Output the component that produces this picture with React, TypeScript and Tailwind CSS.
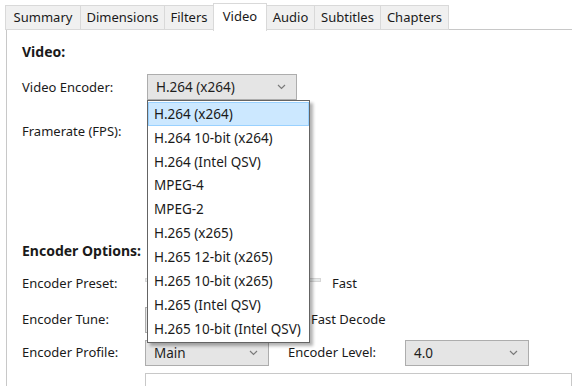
import React from "react";

const tabs = ["Summary", "Dimensions", "Filters", "Video", "Audio", "Subtitles", "Chapters"];
const tabW = [76, 85, 50, 54, 49, 67, 69];

const items = [
  "H.264 (x264)",
  "H.264 10-bit (x264)",
  "H.264 (Intel QSV)",
  "MPEG-4",
  "MPEG-2",
  "H.265 (x265)",
  "H.265 12-bit (x265)",
  "H.265 10-bit (x265)",
  "H.265 (Intel QSV)",
  "H.265 10-bit (Intel QSV)",
];

function Chevron() {
  return (
    <svg width="9" height="6" viewBox="0 0 9 6" className="shrink-0">
      <path d="M1 1 L4.5 4.5 L8 1" fill="none" stroke="#7a7a7a" strokeWidth="1.2" />
    </svg>
  );
}

function Combo({ value, w }: { value: string; w: string }) {
  return (
    <div
      className={`${w} h-[26px] flex items-center justify-between pl-[8px] pr-[10px] border border-[#adadad] bg-[#e5e5e5] text-[#1e1e1e] text-[13.5px]`}
    >
      <span className="mt-px">{value}</span>
      <Chevron />
    </div>
  );
}

export default function App() {
  return (
    <div
      className="relative w-[572px] h-[386px] overflow-hidden bg-white text-[13px] text-[#1a1a1a]"
      style={{ fontFamily: '"Segoe UI", "Noto Sans", "Open Sans", sans-serif' }}
    >
      {/* Tab strip */}
      <div className="flex items-end h-[30px] pl-[5px]">
        {tabs.map((t, i) =>
          t === "Video" ? (
            <div
              key={t}
              style={{ width: tabW[i] }}
              className="relative z-10 h-[28px] -mb-px -ml-px flex items-center justify-center bg-white border border-b-0 border-[#d9d9d9] pb-[2px]"
            >
              {t}
            </div>
          ) : (
            <div
              key={t}
              style={{ width: tabW[i] }}
              className="h-[25px] flex items-center justify-center bg-[#f0f0f0] border border-[#d9d9d9] -ml-px first:ml-0"
            >
              {t}
            </div>
          )
        )}
      </div>

      {/* Panel */}
      <div className="ml-[6px] h-[400px] border-l border-t border-[#c8c8c8] -mt-px pl-[15px]">
        <div className="h-[10px]" />
        <div className="h-[22px] flex items-center font-bold text-[14px]">Video:</div>
        <div className="h-[12px]" />
        <div className="h-[26px] flex items-center">
          <div className="w-[125px] mt-[2px]">Video Encoder:</div>
          <Combo value="H.264 (x264)" w="w-[150px]" />
        </div>
        <div className="h-[20px]" />
        <div className="h-[24px] flex items-center">
          <div className="w-[125px]">Framerate (FPS):</div>
        </div>
        <div className="h-[95px]" />
        <div className="h-[22px] flex items-center font-bold text-[14px]">Encoder Options:</div>
        <div className="h-[10px]" />
        <div className="h-[26px] flex items-center">
          <div className="w-[123px]">Encoder Preset:</div>
          <div className="w-[176px] h-[4px] bg-[#e7eaea] border border-[#d6d6d6] -mt-[8px]" />
          <div className="ml-[11px]">Fast</div>
        </div>
        <div className="h-[10px]" />
        <div className="h-[26px] flex items-center">
          <div className="w-[123px]">Encoder Tune:</div>
          <Combo value="" w="w-[124px]" />
          <div className="ml-[42px]">Fast Decode</div>
        </div>
        <div className="h-[7px]" />
        <div className="h-[26px] flex items-center">
          <div className="w-[123px]">Encoder Profile:</div>
          <Combo value="Main" w="w-[124px]" />
          <div className="w-[136px] pl-[19px]">Encoder Level:</div>
          <Combo value="4.0" w="w-[124px]" />
        </div>
        <div className="h-[7px]" />
        <div className="ml-[123px] h-[40px] border border-[#c8c8c8]" />
      </div>

      {/* Dropdown list (overlay) */}
      <div className="absolute left-[147px] top-[100px] w-[163px] border border-[#646464] bg-white shadow-[3px_3px_3px_rgba(0,0,0,0.3)] py-px text-[13.5px]">
        {items.map((it, i) => (
          <div
            key={it}
            className={`h-[23.9px] flex items-center pl-[5px] ${
              i === 0 ? "bg-[#cce8ff] border border-[#99d1ff]" : "border border-transparent"
            }`}
          >
            {it}
          </div>
        ))}
      </div>
    </div>
  );
}
